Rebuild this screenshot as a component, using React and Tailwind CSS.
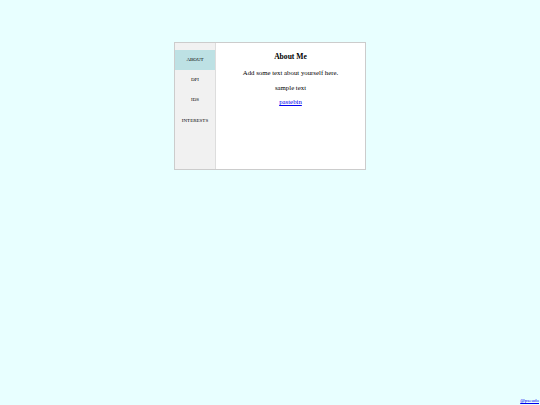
export default function App() {
  const tabs = ["ABOUT", "DPI", "IDS", "INTERESTS"];
  return (
    <div className="w-full h-screen bg-[#e8ffff] flex flex-col" style={{ fontFamily: '"Liberation Serif", "Times New Roman", serif' }}>
      <div className="mt-[42px] mx-auto w-[192px] h-[128px] border border-[#cccccc] flex bg-white">
        <div className="w-[41px] bg-[#f1f1f1] border-r border-[#dddddd] pt-[6.5px] flex flex-col">
          {tabs.map((t, i) => (
            <div
              key={t}
              className={`h-[20.3px] flex items-center justify-center text-[5px] text-black ${i === 0 ? "bg-[#bde1e4]" : ""}`}
            >
              {t}
            </div>
          ))}
        </div>
        <div className="flex-1 flex flex-col items-center pt-[8px] text-black">
          <div className="text-[7.6px] font-bold leading-[12px]">About Me</div>
          <div className="text-[6.8px] leading-[10px] mt-[5px]">Add some text about yourself here.</div>
          <div className="text-[6.8px] leading-[10px] mt-[5px]">sample text</div>
          <a href="#" className="text-[6.8px] leading-[10px] mt-[4px] text-[#0000ee] underline">pastebin</a>
        </div>
      </div>
      <div className="flex-1" />
      <div className="flex justify-end pr-[1px] pb-[1px]">
        <a href="#" className="text-[5px] leading-[6px] text-[#0000ee] underline">@pseudo</a>
      </div>
    </div>
  );
}
